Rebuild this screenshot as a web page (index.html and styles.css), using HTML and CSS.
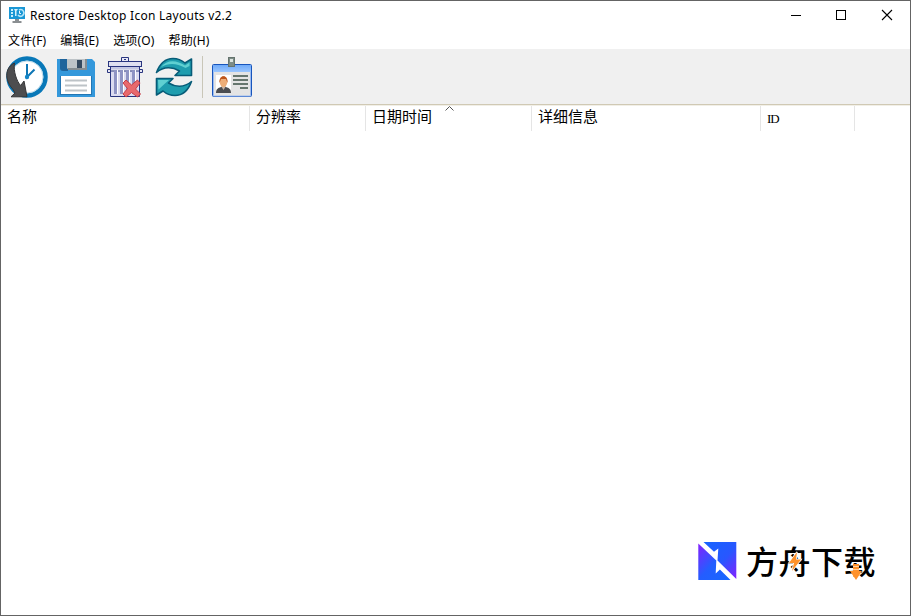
FILE: index.html
```html
<!DOCTYPE html>
<html lang="zh-CN">
<head>
    <meta charset="UTF-8">
    <meta name="viewport" content="width=device-width, initial-scale=1.0">
    <title>Restore Desktop Icon Layouts v2.2</title>
    <link rel="stylesheet" href="styles.css">
</head>
<body>
<div class="window">
    <div class="titlebar">
        <svg class="app-icon" width="16" height="16" viewBox="0 0 16 16">
            <rect width="16" height="12" fill="#1a97d5"/>
            <path d="M2 2h2v2H2zM2 5h2v2H2zM2 8h2v2H2z" fill="#c9edfb"/>
            <path d="M5 2h4L7.500 4v5H6V4z" fill="#d8f2fc"/>
            <path d="M10 3a3.300 3.300 0 1 1-1 5" fill="none" stroke="#b8e6fa" stroke-width="1.500"/>
            <path d="M10.500 4v2.500H12" fill="none" stroke="#e8f8ff"/>
            <path d="M6 12h4v2h2.500v2h-9v-2H6z" fill="#8b8f92"/>
        </svg>
        <span class="title">Restore Desktop Icon Layouts v2.2</span>
        <div class="window-buttons">
            <svg width="46" height="28" viewBox="0 0 46 28"><path d="M19 14.500h10" stroke="#000"/></svg>
            <svg width="46" height="28" viewBox="0 0 46 28"><rect x="18.500" y="9.500" width="9" height="9" fill="none" stroke="#000"/></svg>
            <svg width="46" height="28" viewBox="0 0 46 28"><path d="M18 9l10 10M28 9L18 19" stroke="#000" stroke-width="1.100"/></svg>
        </div>
    </div>

    <div class="menubar">
        <span class="menu-item">文件(F)</span>
        <span class="menu-item">编辑(E)</span>
        <span class="menu-item">选项(O)</span>
        <span class="menu-item">帮助(H)</span>
    </div>

    <div class="toolbar">
        <!-- restore -->
        <svg class="tool tool-restore" width="42" height="42" viewBox="0 0 42 42">
            <circle cx="21" cy="20" r="18.500" fill="#fff" stroke="#0878b8" stroke-width="4.500"/>
            <circle cx="21" cy="20" r="16" fill="none" stroke="#b9d9ea" stroke-width="1"/>
            <path d="M21 7v13l7.500-7.500" fill="none" stroke="#0e76b5" stroke-width="2"/>
            <circle cx="21" cy="20" r="2.200" fill="#1485c6"/>
            <path d="M8.500 6C2 9 0 15 1 21c1 5 3 8 6 11.500L9 36l-4 3.800h16L18 24l-3.300 4.500C11 25 7 14 8.500 6z" fill="#4d4d4f" stroke="#353537"/>
        </svg>
        <!-- save -->
        <svg class="tool tool-save" width="38" height="38" viewBox="0 0 38 38">
            <path d="M0 0h35l3 3v35H0z" fill="#3498db"/>
            <path d="M3 0h8v12H6a3 3 0 0 1-3-3z" fill="#1f649b"/>
            <path d="M10 0h20v10.500H12a2 2 0 0 1-2-2z" fill="#bdc3c7"/>
            <path d="M28 0h2v11H11v-2h17z" fill="#858d91"/>
            <rect x="20" y="1" width="5" height="8" fill="#34495e"/>
            <rect x="3" y="17" width="32" height="19" fill="#2476b2"/>
            <rect x="4" y="17" width="30" height="18" fill="#fff"/>
            <path d="M8 21.500h22M8 26.500h22M8 31.500h22" stroke="#bdc3c7" stroke-width="2"/>
        </svg>
        <!-- delete -->
        <svg class="tool tool-delete" width="36" height="41" viewBox="0 0 36 41">
            <path d="M3.500 14h29v25.500h-29z" fill="#dcdcf0" stroke="#29357f"/>
            <path d="M7 13h3v24H7zM13 13h3v24h-3zM19 13h3v24h-3zM25 13h3v24h-3z" fill="#8f94c4"/>
            <path d="M10.500 13v24M16.500 13v24M22.500 13v24M28.500 13v24" stroke="#fff"/>
            <path d="M14.500 5V.5h7V5M3 12.500H.5v3H3M33 12.500h2.500v3H33" fill="#e8e8f5" stroke="#29357f"/>
            <path d="M17 2.500h2" stroke="#29357f"/>
            <path d="M3.500 9.500V14M32.500 9.500V14" stroke="#29357f"/>
            <rect x="1.500" y="4.500" width="33" height="5" fill="#dfe0f0" stroke="#29357f"/>
            <path d="M4 10h28v2.500H4z" fill="#c3c6e2"/>
            <path d="M16 26l3-3 5.500 5 6-5 2.500 3-4.500 6 5 5-3 3-6-4.500-5.500 4.500-3-3 4.500-5.500z" fill="#e8696d" stroke="#c73c46"/>
        </svg>
        <!-- refresh -->
        <svg class="tool tool-refresh" width="38" height="40" viewBox="0 0 38 40">
            <g fill="#1f9dae" stroke="#075c78" stroke-width="1.600" stroke-linejoin="round">
                <path d="M1.500 15.500C5 6 11 1.500 18 1.500c5 0 8.500 1.500 12 4.500l6.500-4v16.500H20l4.500-4.500C18 10 9 9 1.500 15.500z"/>
                <path d="M36.500 24.500C33 34 27 38.500 20 38.500c-5 0-8.500-1.500-12-4.500l-6.500 4V21.500H18L13.500 26C20 30 29 31 36.500 24.500z"/>
            </g>
            <path d="M6 10C12 2 22 3 30 8.500l4.500-3V9l-4 2C21 6 14 6 6 10zM3 23h11l-4 3.500-6.500 6z" fill="#5fd0d2"/>
        </svg>
        <div class="separator"></div>
        <!-- about -->
        <svg class="tool tool-about" width="40" height="40" viewBox="0 0 40 40">
            <defs>
                <linearGradient id="cardTop" x1="0" y1="0" x2="0" y2="1">
                    <stop offset="0" stop-color="#6faaf8"/>
                    <stop offset="1" stop-color="#9bc6ff"/>
                </linearGradient>
            </defs>
            <rect x=".5" y="7.500" width="39" height="32" rx="1" fill="#e4e4e4" stroke="#1855bd"/>
            <path d="M1 8h38v7H1z" fill="url(#cardTop)"/>
            <path d="M1.500 15v24h37V15" fill="none" stroke="#9dbcf0"/>
            <rect x="4" y="18" width="15" height="18" fill="#fff"/>
            <path d="M4 36c0-4 2-5 5-6h5c3 1 5 2 5 6z" fill="#4b4d51"/>
            <path d="M9 29h5l-2.500 4z" fill="#c9b5a5"/>
            <ellipse cx="11.500" cy="24.500" rx="3.800" ry="5.500" fill="#edae79"/>
            <path d="M7.500 26c-1-9 9-9 8 0l-1.500-4h-5z" fill="#bd551b"/>
            <path d="M21 18h15v2H21zM21 22h15v2H21zM21 26h15v2H21zM28 30h8v2h-8z" fill="#66766e"/>
            <rect x="16.500" y=".5" width="6" height="9" fill="#7d8c86" stroke="#65746e"/>
            <path d="M18 2h3v3h-3z" fill="#dce4e0"/>
        </svg>
    </div>

    <div class="list-header">
        <div class="column col-name">名称</div>
        <div class="column col-resolution">分辨率</div>
        <div class="column col-date">日期时间
            <svg class="sort-arrow" width="9" height="5" viewBox="0 0 9 5"><path d="M.5 4.500l4-4 4 4" fill="none" stroke="#555"/></svg>
        </div>
        <div class="column col-details">详细信息</div>
        <div class="column col-id">ID</div>
    </div>

    <div class="list-body"></div>

    <div class="watermark">
        <svg class="mark" width="39" height="39" viewBox="0 0 39 39">
            <defs>
                <linearGradient id="markTop" x1="0" y1="0" x2="1" y2="1">
                    <stop offset="0" stop-color="#1664ff"/>
                    <stop offset=".55" stop-color="#2857ff"/>
                    <stop offset="1" stop-color="#8420ff"/>
                </linearGradient>
                <linearGradient id="markBottom" x1="0" y1="0" x2="1" y2="1">
                    <stop offset="0" stop-color="#8420ff"/>
                    <stop offset=".5" stop-color="#245dff"/>
                    <stop offset="1" stop-color="#1768ff"/>
                </linearGradient>
            </defs>
            <path d="M5.500 0h32.800v37L19.500 18.500l.8-12-4.300 3.200z" fill="url(#markTop)"/>
            <path d="M.3 1.500L18.300 18.500l-.6 13 4.200-4L32.500 38H.3z" fill="url(#markBottom)"/>
        </svg>
        <div class="brand">
            <span>方</span><span>舟</span><span>下</span><span>载</span>
            <svg class="bolt" width="12" height="19" viewBox="0 0 12 19"><path d="M8 0L0 11h5L3 19 12 7.500H7z" fill="#ff922b" stroke="#fff" stroke-width="1.500" paint-order="stroke"/></svg>
            <svg class="down" width="12" height="16" viewBox="0 0 12 16"><path d="M3 0h6v7h3l-6 9-6-9h3z" fill="#ff922b"/><path d="M3 2.500h6M3 5.500h6" stroke="#ffd09b"/></svg>
        </div>
    </div>
</div>
</body>
</html>
```
FILE: styles.css
```css
* {
    box-sizing: border-box;
}

body {
    margin: 0;
    font-family: "Noto Sans", "Noto Sans CJK SC", sans-serif;
    font-size: 12px;
    color: #000;
    background-color: #fff;
}

svg {
    display: block;
    flex-shrink: 0;
    overflow: visible;
}

.window {
    display: flex;
    flex-direction: column;
    height: 100vh;
    border: 1px solid #646464;
    background-color: #fff;
    overflow: hidden;
}

.titlebar {
    display: flex;
    height: 29px;
    padding-left: 8px;
}

.app-icon {
    margin-top: 6px;
}

.title {
    margin-left: 5px;
    line-height: 29px;
    letter-spacing: 0.26px;
    white-space: nowrap;
}

.window-buttons {
    display: flex;
    margin-left: auto;
}

.menubar {
    display: flex;
    height: 19px;
    padding-left: 7px;
    line-height: 22px;
    white-space: nowrap;
}

.menu-item {
    margin-right: 14px;
    letter-spacing: 0.18px;
}

.toolbar {
    display: flex;
    align-items: flex-start;
    height: 56px;
    padding: 8px 0 0 5px;
    background-color: #f0f0f0;
    border-bottom: 1px solid #d0c9b4;
}

.tool-save {
    margin: 2px 0 0 9px;
}

.tool-delete {
    margin-left: 12px;
}

.tool-refresh {
    margin-left: 12px;
}

.separator {
    width: 1px;
    height: 42px;
    margin: -1px 0 0 9px;
    background-color: #c9c6b8;
}

.tool-about {
    margin-left: 9px;
}

.list-header {
    display: flex;
    height: 26px;
    border-top: 1px solid #f1efe7;
}

.column {
    position: relative;
    padding-left: 6px;
    border-right: 1px solid #e5e5e5;
    font-family: "Noto Sans CJK SC", sans-serif;
    font-size: 15px;
    line-height: 20px;
    white-space: nowrap;
}

.col-name {
    width: 249px;
}

.col-resolution {
    width: 116px;
}

.col-date {
    width: 166px;
}

.col-details {
    width: 229px;
}

.col-id {
    width: 94px;
    font-family: "Liberation Serif", serif;
    font-size: 13px;
    line-height: 25px;
    letter-spacing: -1px;
}

.sort-arrow {
    position: absolute;
    left: 79px;
    top: 0;
}

.list-body {
    flex: 1;
}

.watermark {
    display: flex;
    align-items: center;
    align-self: flex-end;
    height: 40px;
    margin: 0 34px 34px 0;
}

.brand {
    position: relative;
    display: flex;
    margin: -3px 0 0 9px;
    font-family: "Noto Sans CJK SC", sans-serif;
    font-size: 32px;
    font-weight: 500;
    line-height: 40px;
    letter-spacing: 0.5px;
}

.bolt {
    position: absolute;
    left: 43px;
    top: 12px;
}

.down {
    position: absolute;
    left: 104px;
    top: 24px;
}
```
